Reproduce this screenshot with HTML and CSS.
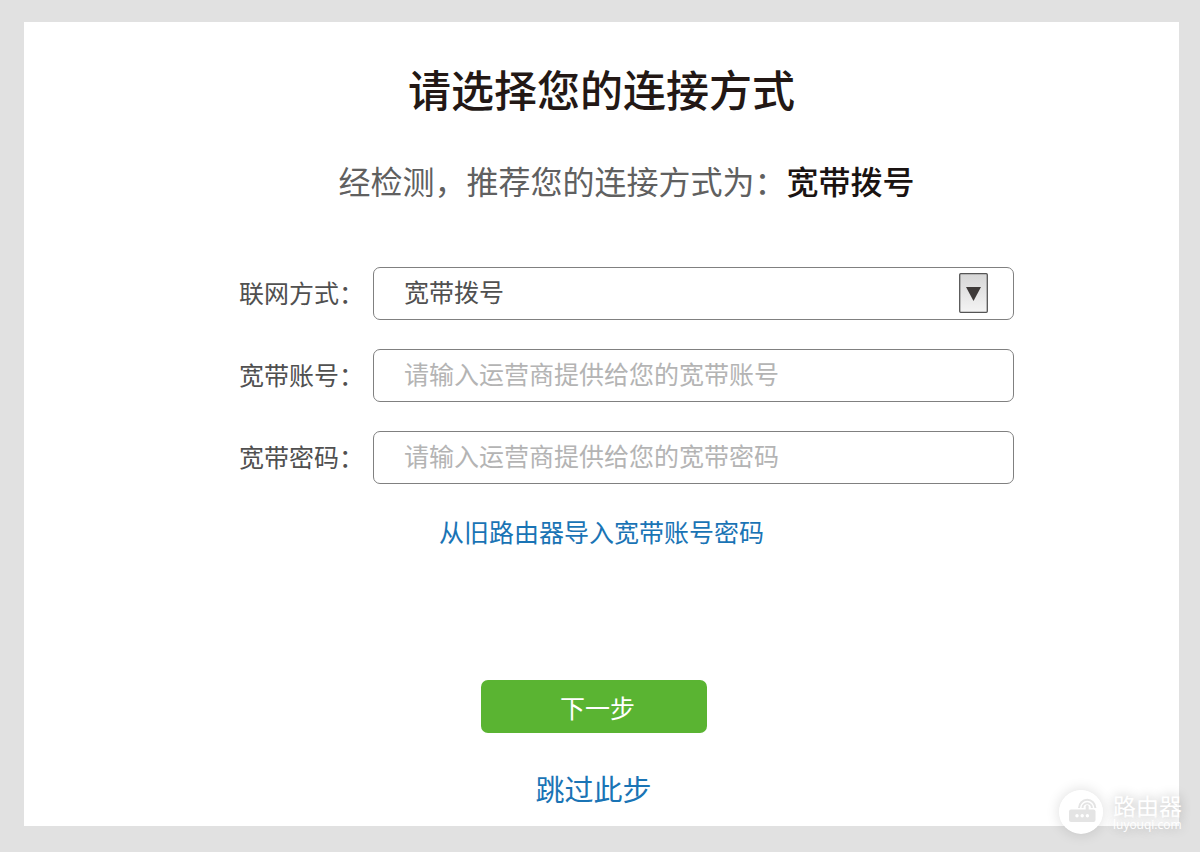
FILE: index.html
```
<!DOCTYPE html>
<html lang="zh-CN">
<head>
    <meta charset="UTF-8">
    <meta name="viewport" content="width=device-width, initial-scale=1.0">
    <title>请选择您的连接方式</title>
    <link rel="stylesheet" href="styles.css">
</head>
<body>
    <main class="card">
        <h1 class="title">请选择您的连接方式</h1>
        <p class="subtitle">经检测，推荐您的连接方式为：<strong>宽带拨号</strong></p>

        <form class="wizard">
            <div class="fields">
                <label for="mode">联网方式：</label>
                <div class="select-box">
                    <select class="field" id="mode" name="mode">
                        <option>宽带拨号</option>
                    </select>
                    <svg class="arrow" viewBox="0 0 29 40" aria-hidden="true">
                        <defs>
                            <linearGradient id="arrowFill" x1="0" y1="0" x2="0" y2="1">
                                <stop offset="0" stop-color="#d6d6d6"/>
                                <stop offset="1" stop-color="#f4f4f4"/>
                            </linearGradient>
                        </defs>
                        <rect x="0.7" y="0.7" width="27.6" height="38.6" rx="1" fill="url(#arrowFill)" stroke="#555" stroke-width="1.3"/>
                        <path d="M7 14h15l-7.500 14z" fill="#3e3a39"/>
                    </svg>
                </div>

                <label for="account">宽带账号：</label>
                <input class="field" type="text" id="account" name="account" placeholder="请输入运营商提供给您的宽带账号">

                <label for="password">宽带密码：</label>
                <input class="field" type="password" id="password" name="password" placeholder="请输入运营商提供给您的宽带密码">
            </div>

            <a class="import-link" href="#">从旧路由器导入宽带账号密码</a>

            <div class="actions">
                <button class="next" type="submit">下一步</button>
                <a class="skip" href="#">跳过此步</a>
            </div>
        </form>
    </main>

    <div class="brand">
        <svg class="brand-logo" viewBox="0 0 44 44" aria-hidden="true">
            <circle cx="22" cy="22" r="22" fill="#fff"/>
            <rect x="10" y="19.500" width="26.500" height="12.500" rx="2" fill="#e4e4e4"/>
            <g fill="none" stroke="#e4e4e4" stroke-width="2">
                <path d="M20 18a8.200 8.200 0 0 1 16.400 0"/>
                <path d="M23.500 18a4.700 4.700 0 0 1 9.400 0"/>
                <path d="M28.200 20v-3.500" stroke-width="3" stroke-linecap="round"/>
            </g>
            <g fill="#fff">
                <circle cx="18" cy="25.700" r="1.700"/>
                <circle cx="23.200" cy="25.700" r="1.700"/>
                <circle cx="28.400" cy="25.700" r="1.700"/>
            </g>
        </svg>
        <div class="brand-text">
            <span class="brand-name">路由器</span>
            <span class="brand-url">luyouqi.com</span>
        </div>
    </div>
</body>
</html>
```

FILE: styles.css
```
* {
    box-sizing: border-box;
}
body {
    font-family: "Noto Sans CJK SC", sans-serif;
    font-size: 25px;
    color: #505050;
    background-color: #e1e1e1;
    margin: 0;
    padding: 22px 21px 26px 24px;
    min-height: 100vh;
    display: flex;
    flex-direction: column;
    position: relative;
}
.card {
    flex: 1;
    background-color: #fff;
    padding: 36px 20px 16px;
}
.title {
    margin: 0;
    font-size: 43px;
    line-height: 60px;
    font-weight: 500;
    text-align: center;
    color: #231815;
}
.subtitle {
    margin: 38px 0 63px;
    padding-left: 50px;
    font-size: 32px;
    line-height: 48px;
    text-align: center;
    color: #606060;
}
.subtitle strong {
    font-weight: 500;
    color: #1a1311;
}
.wizard {
    display: flex;
    flex-direction: column;
    align-items: center;
}
.fields {
    width: 74%;
    padding-left: 50px;
    display: grid;
    grid-template-columns: 134px 1fr;
    row-gap: 29px;
    align-items: center;
}
.fields label {
    white-space: nowrap;
    line-height: 36px;
    padding-bottom: 4px;
}
.field {
    display: block;
    width: 100%;
    height: 53px;
    padding: 0 30px 6px;
    font: inherit;
    color: #505050;
    background-color: #fff;
    border: 1px solid #808080;
    border-radius: 7px;
    appearance: none;
}
.field::placeholder {
    color: #b4b4b4;
    opacity: 1;
}
.select-box {
    position: relative;
}
.arrow {
    position: absolute;
    top: 6px;
    right: 26px;
    width: 29px;
    height: 40px;
    pointer-events: none;
}
a {
    color: #1a74b5;
    text-decoration: none;
}
.import-link {
    margin-top: 29px;
    line-height: 36px;
}
.actions {
    margin-top: 131px;
    padding-right: 16px;
    display: flex;
    flex-direction: column;
    align-items: center;
    gap: 35px;
}
.next {
    width: 226px;
    height: 53px;
    padding: 0 0 0 8px;
    border: none;
    border-radius: 7px;
    background-color: #5ab432;
    color: #fff;
    font: inherit;
    cursor: pointer;
}
.skip {
    font-size: 29px;
    line-height: 40px;
}
/* site mark over the lower right corner */
.brand {
    position: absolute;
    right: 18px;
    bottom: 18px;
    display: flex;
    align-items: center;
    gap: 10px;
    color: #fff;
}
.brand-logo {
    width: 44px;
    height: 44px;
    border-radius: 50%;
    box-shadow: 0 0 14px rgba(0, 0, 0, 0.14);
}
.brand-text {
    display: flex;
    flex-direction: column;
    text-shadow: 0 0 12px rgba(0, 0, 0, 0.3);
}
.brand-name {
    font-size: 23px;
    line-height: 26px;
}
.brand-url {
    font-family: "Open Sans", sans-serif;
    font-size: 12px;
    line-height: 14px;
}
```
